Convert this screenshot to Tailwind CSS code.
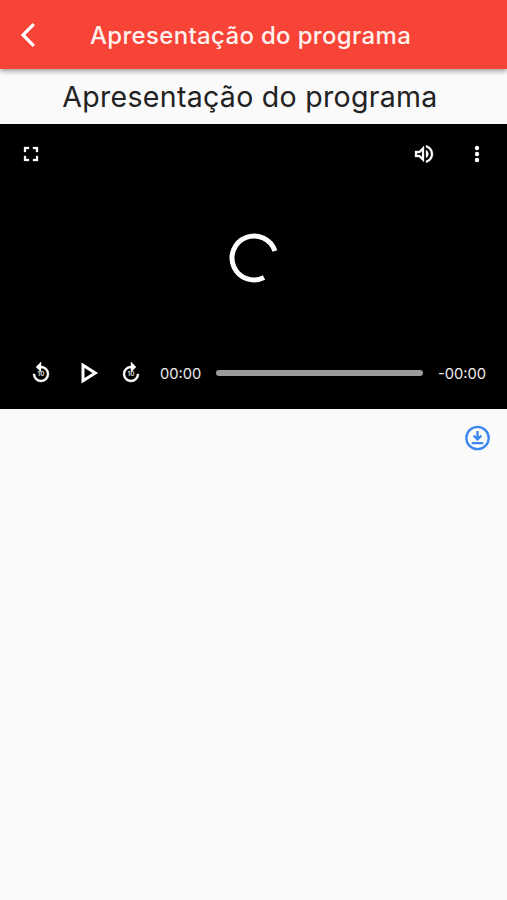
<!DOCTYPE html>
<html lang="pt-BR">
<head>
  <meta charset="UTF-8">
  <meta name="viewport" content="width=device-width, initial-scale=1.0">
  <title>Apresentação do programa</title>
  <script src="https://cdn.jsdelivr.net/npm/@tailwindcss/browser@4"></script>
</head>
<body class="bg-[#fafafa] font-['Inter',sans-serif] min-h-screen overflow-hidden">
  <header class="relative h-[69px] bg-[#f84437] shadow-[0_2px_5px_rgba(0,0,0,0.4)] grid grid-cols-[56px_1fr_62px] items-center">
    <button class="pl-5" aria-label="Voltar">
      <svg class="block w-4 h-6" viewBox="0 0 16 24" fill="none" stroke="#fff" stroke-width="3.2"><path d="M13.8 1.2 3 12l10.8 10.8"/></svg>
    </button>
    <h1 class="pt-[3px] text-center text-[24px] leading-7 font-medium tracking-[0.33px] whitespace-nowrap text-[#fff1ef]">Apresentação do programa</h1>
  </header>

  <main>
    <h2 class="h-[55px] pt-px pr-[7px] text-center text-[28.5px] leading-[54px] tracking-[0.3px] whitespace-nowrap text-[#222]">Apresentação do programa</h2>

    <section class="h-[284.5px] bg-black text-white flex flex-col justify-between">
      <!-- top controls -->
      <div class="h-[60px] flex items-center pl-[19px] pr-[18px]">
        <button aria-label="Tela cheia">
          <svg class="block w-6 h-6" viewBox="0 0 24 24" fill="currentColor" stroke="currentColor" stroke-width="0.3"><path d="M7 14H5v5h5v-2H7v-3zm-2-4h2V7h3V5H5v5zm12 7h-3v2h5v-5h-2v3zM14 5v2h3v3h2V5h-5z"/></svg>
        </button>
        <button class="ml-auto" aria-label="Volume">
          <svg class="block w-6 h-6" viewBox="0 0 24 24" fill="currentColor" stroke="currentColor" stroke-width="0.3"><path d="M3 9v6h4l5 5V4L7 9H3zm7-.17v6.34L7.83 13H5v-2h2.83L10 8.83zM16.5 12A4.5 4.5 0 0 0 14 7.97v8.05A4.47 4.47 0 0 0 16.5 12zM14 3.23v2.06c2.89.86 5 3.54 5 6.71s-2.11 5.85-5 6.71v2.06c4.01-.91 7-4.49 7-8.77s-2.99-7.86-7-8.77z"/></svg>
        </button>
        <button class="ml-[29px]" aria-label="Mais opções">
          <svg class="block w-6 h-6" viewBox="0 0 24 24" fill="currentColor"><circle cx="12" cy="6" r="2.2"/><circle cx="12" cy="12" r="2.2"/><circle cx="12" cy="18" r="2.2"/></svg>
        </button>
      </div>

      <!-- loading spinner -->
      <svg class="block mx-auto w-[50px] h-[50px] mt-[-6px]" viewBox="0 0 50 50" fill="none" stroke="#fff" stroke-width="5"><path d="M45.9 18A22 22 0 1 0 35 44.6"/></svg>

      <!-- playback controls -->
      <div class="h-[71px] flex items-center pl-[29px] pr-[21px] text-[14.7px]">
        <button aria-label="Voltar 10 segundos">
          <svg class="block w-6 h-6" viewBox="0 0 24 24" fill="currentColor"><path stroke="currentColor" stroke-width="0.4" d="M12 5V1L7 6l5 5V7a6 6 0 1 1-6 6H4a8 8 0 1 0 8-8z"/><text x="12" y="15.4" text-anchor="middle" font-size="6.2" font-weight="700" fill="#ddd">10</text></svg>
        </button>
        <button class="ml-[27px]" aria-label="Reproduzir">
          <svg class="block w-5 h-6" viewBox="0 0 20 24" fill="none" stroke="#fff" stroke-width="3"><path d="M3 4.2v15.6L15.3 12z"/></svg>
        </button>
        <button class="ml-[19px]" aria-label="Avançar 10 segundos">
          <svg class="block w-6 h-6" viewBox="0 0 24 24" fill="currentColor"><path stroke="currentColor" stroke-width="0.4" d="M12 5V1l5 5-5 5V7a6 6 0 1 0 6 6h2a8 8 0 1 1-8-8z"/><text x="12" y="15.4" text-anchor="middle" font-size="6.2" font-weight="700" fill="#ddd">10</text></svg>
        </button>
        <span class="ml-[17px] w-[56px] pt-[2px] text-[#eee] whitespace-nowrap">00:00</span>
        <div class="h-1.5 flex-1 rounded-full bg-[#9b9b9b]"></div>
        <span class="w-[63px] pt-[2px] text-right text-[#eee] whitespace-nowrap">-00:00</span>
      </div>
    </section>

    <div class="flex justify-end pt-[16.5px] pr-[17px]">
      <button aria-label="Baixar">
        <svg class="block w-[25px] h-[26px]" viewBox="0 0 25 26" fill="none" stroke="#3b86f0" stroke-width="2.3"><circle cx="12.5" cy="13" r="11.2"/><path d="M6.7 18.2h11.6M12.5 6v8M8.7 10.6l3.8 3.8 3.8-3.8"/></svg>
      </button>
    </div>
  </main>
</body>
</html>
